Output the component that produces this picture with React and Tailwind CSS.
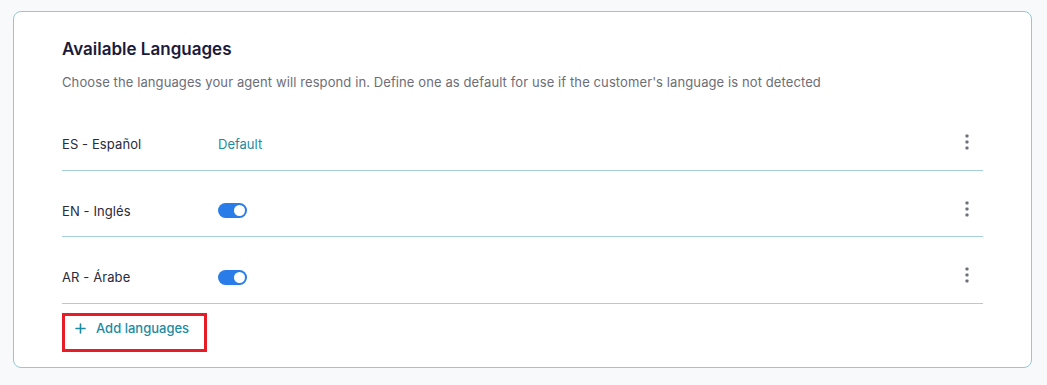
import React from "react";

function Dots() {
  return (
    <svg width="16" height="18" viewBox="0 0 16 18" className="mr-2 shrink-0">
      <rect x="6.5" y="2.5" width="3" height="3" rx="0.8" fill="#6b7079" />
      <rect x="6.5" y="8.5" width="3" height="3" rx="0.8" fill="#6b7079" />
      <rect x="6.5" y="14.5" width="3" height="3" rx="0.8" fill="#6b7079" />
    </svg>
  );
}

function Toggle() {
  return (
    <div className="w-[29px] h-[15px] rounded-full bg-[#2a7de8] flex items-center justify-end pr-[2px]">
      <div className="w-[11px] h-[11px] rounded-full bg-white" />
    </div>
  );
}

function Row({ label, right, h }) {
  return (
    <div className={"flex items-center pt-[30px] pb-[16px] border-b border-[#a6cfdd] " + h}>
      <div className="w-[156px] text-[13px] leading-[20px] text-[#2a2a3c] tracking-[0.1px]">{label}</div>
      <div className="flex-1 flex items-center">{right}</div>
      <div className="-mt-[6px]">
        <Dots />
      </div>
    </div>
  );
}

export default function App() {
  return (
    <div
      className="w-[1047px] h-[385px] bg-[#f7f9fb] pt-[11px] pl-[13px]"
      style={{ fontFamily: "Inter, 'Noto Sans', sans-serif" }}
    >
      <div className="w-[1019px] h-[357px] bg-white border border-[#8ccbd8] rounded-[8px] px-12 pt-[25px]">
        <h2 className="text-[17px] leading-[24px] font-semibold text-[#1b1a3a]">
          Available Languages
        </h2>
        <p className="mt-[11px] text-[13px] leading-[20px] text-[#6b6e78] tracking-[0.1px]">
          Choose the languages your agent will respond in. Define one as default for use if the
          customer's language is not detected
        </p>
        <div className="mt-[12px]">
          <Row
            h="h-[67px]"
            label="ES - Español"
            right={<span className="text-[13px] leading-[20px] text-[#1c8ca3]">Default</span>}
          />
          <Row h="h-[66px]" label="EN - Inglés" right={<Toggle />} />
          <Row h="h-[67px]" label="AR - Árabe" right={<Toggle />} />
        </div>
        <div className="mt-[9px] w-[145px] h-[39px] border-[3px] border-[#e81c27] flex items-start pt-[2px] pl-[10px]">
          <div className="flex items-center gap-[10px] text-[13px] leading-[20px] font-medium text-[#1c8ca3]">
            <svg width="11" height="11" viewBox="0 0 11 11">
              <path d="M5.5 1v9M1 5.5h9" stroke="#1c8ca3" strokeWidth="1.6" strokeLinecap="round" />
            </svg>
            <span>Add languages</span>
          </div>
        </div>
      </div>
    </div>
  );
}
